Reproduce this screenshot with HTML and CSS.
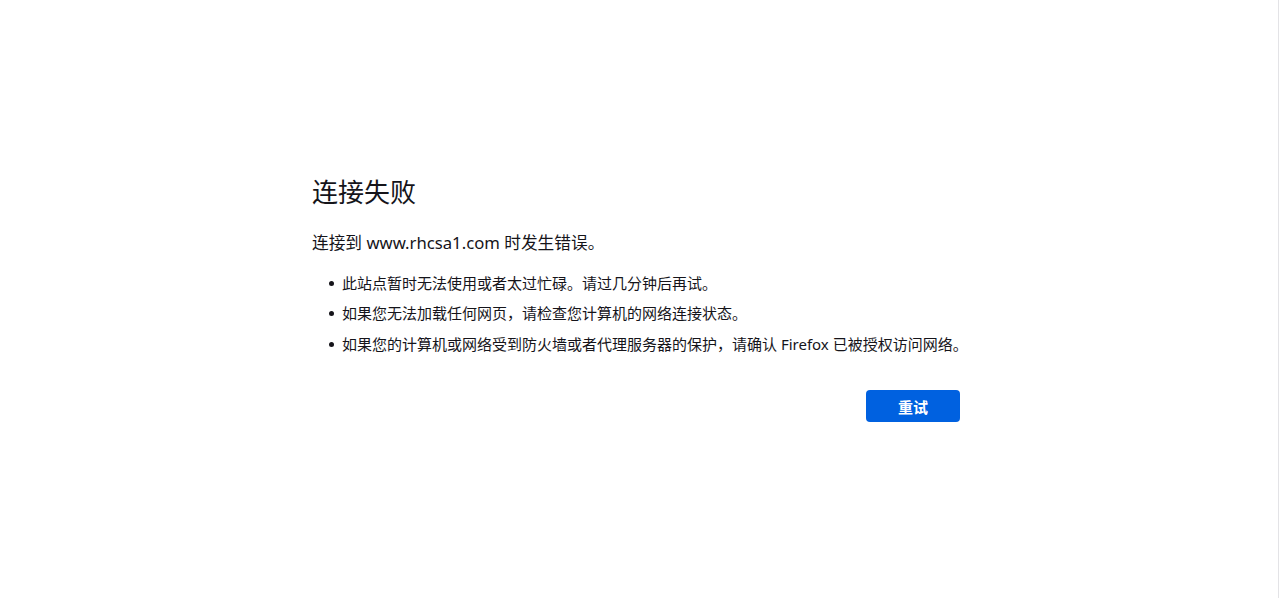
FILE: index.html
```html
<!DOCTYPE html>
<html lang="zh-CN">
<head>
<meta charset="utf-8">
<title>连接失败</title>
<link rel="stylesheet" href="styles.css">
</head>
<body>
<main class="container">
  <h1 class="title">连接失败</h1>
  <p class="desc">连接到 www.rhcsa1.com 时发生错误。</p>
  <ul class="list">
    <li>此站点暂时无法使用或者太过忙碌。请过几分钟后再试。</li>
    <li>如果您无法加载任何网页，请检查您计算机的网络连接状态。</li>
    <li>如果您的计算机或网络受到防火墙或者代理服务器的保护，请确认 Firefox 已被授权访问网络。</li>
  </ul>
  <div class="actions">
    <button class="retry">重试</button>
  </div>
</main>
</body>
</html>
```
FILE: styles.css
```css
html {
  background: #fff;
  border-right: 1px solid #e3e3e6;
}
body {
  margin: 0;
  min-height: 598px;
  display: flex;
  align-items: center;
  font-family: "Noto Sans", "Noto Sans CJK SC", sans-serif;
  color: #15141a;
}
.container {
  width: 672px;
  margin-left: 312px;
}
.title {
  font-size: 26px;
  font-weight: 400;
  line-height: 32px;
  margin: 0 0 23px;
}
.desc {
  font-size: 16.7px;
  line-height: 24px;
  margin: 0 0 17px;
}
.list {
  margin: 0;
  padding-left: 30px;
  list-style: none;
  font-size: 15px;
  line-height: 22px;
}
.list li {
  margin-bottom: 8.5px;
}
.list li::before {
  content: "";
  display: inline-block;
  width: 5px;
  height: 5px;
  border-radius: 50%;
  background: #15141a;
  margin-left: -13px;
  margin-right: 8px;
  vertical-align: 3px;
}
.actions {
  display: flex;
  justify-content: flex-end;
  padding-right: 24px;
  margin-top: 35.5px;
}
.retry {
  width: 94px;
  height: 32px;
  border: none;
  border-radius: 4px;
  background: #0061e0;
  color: #fff;
  font-family: inherit;
  font-size: 15px;
  font-weight: 700;
}
```
